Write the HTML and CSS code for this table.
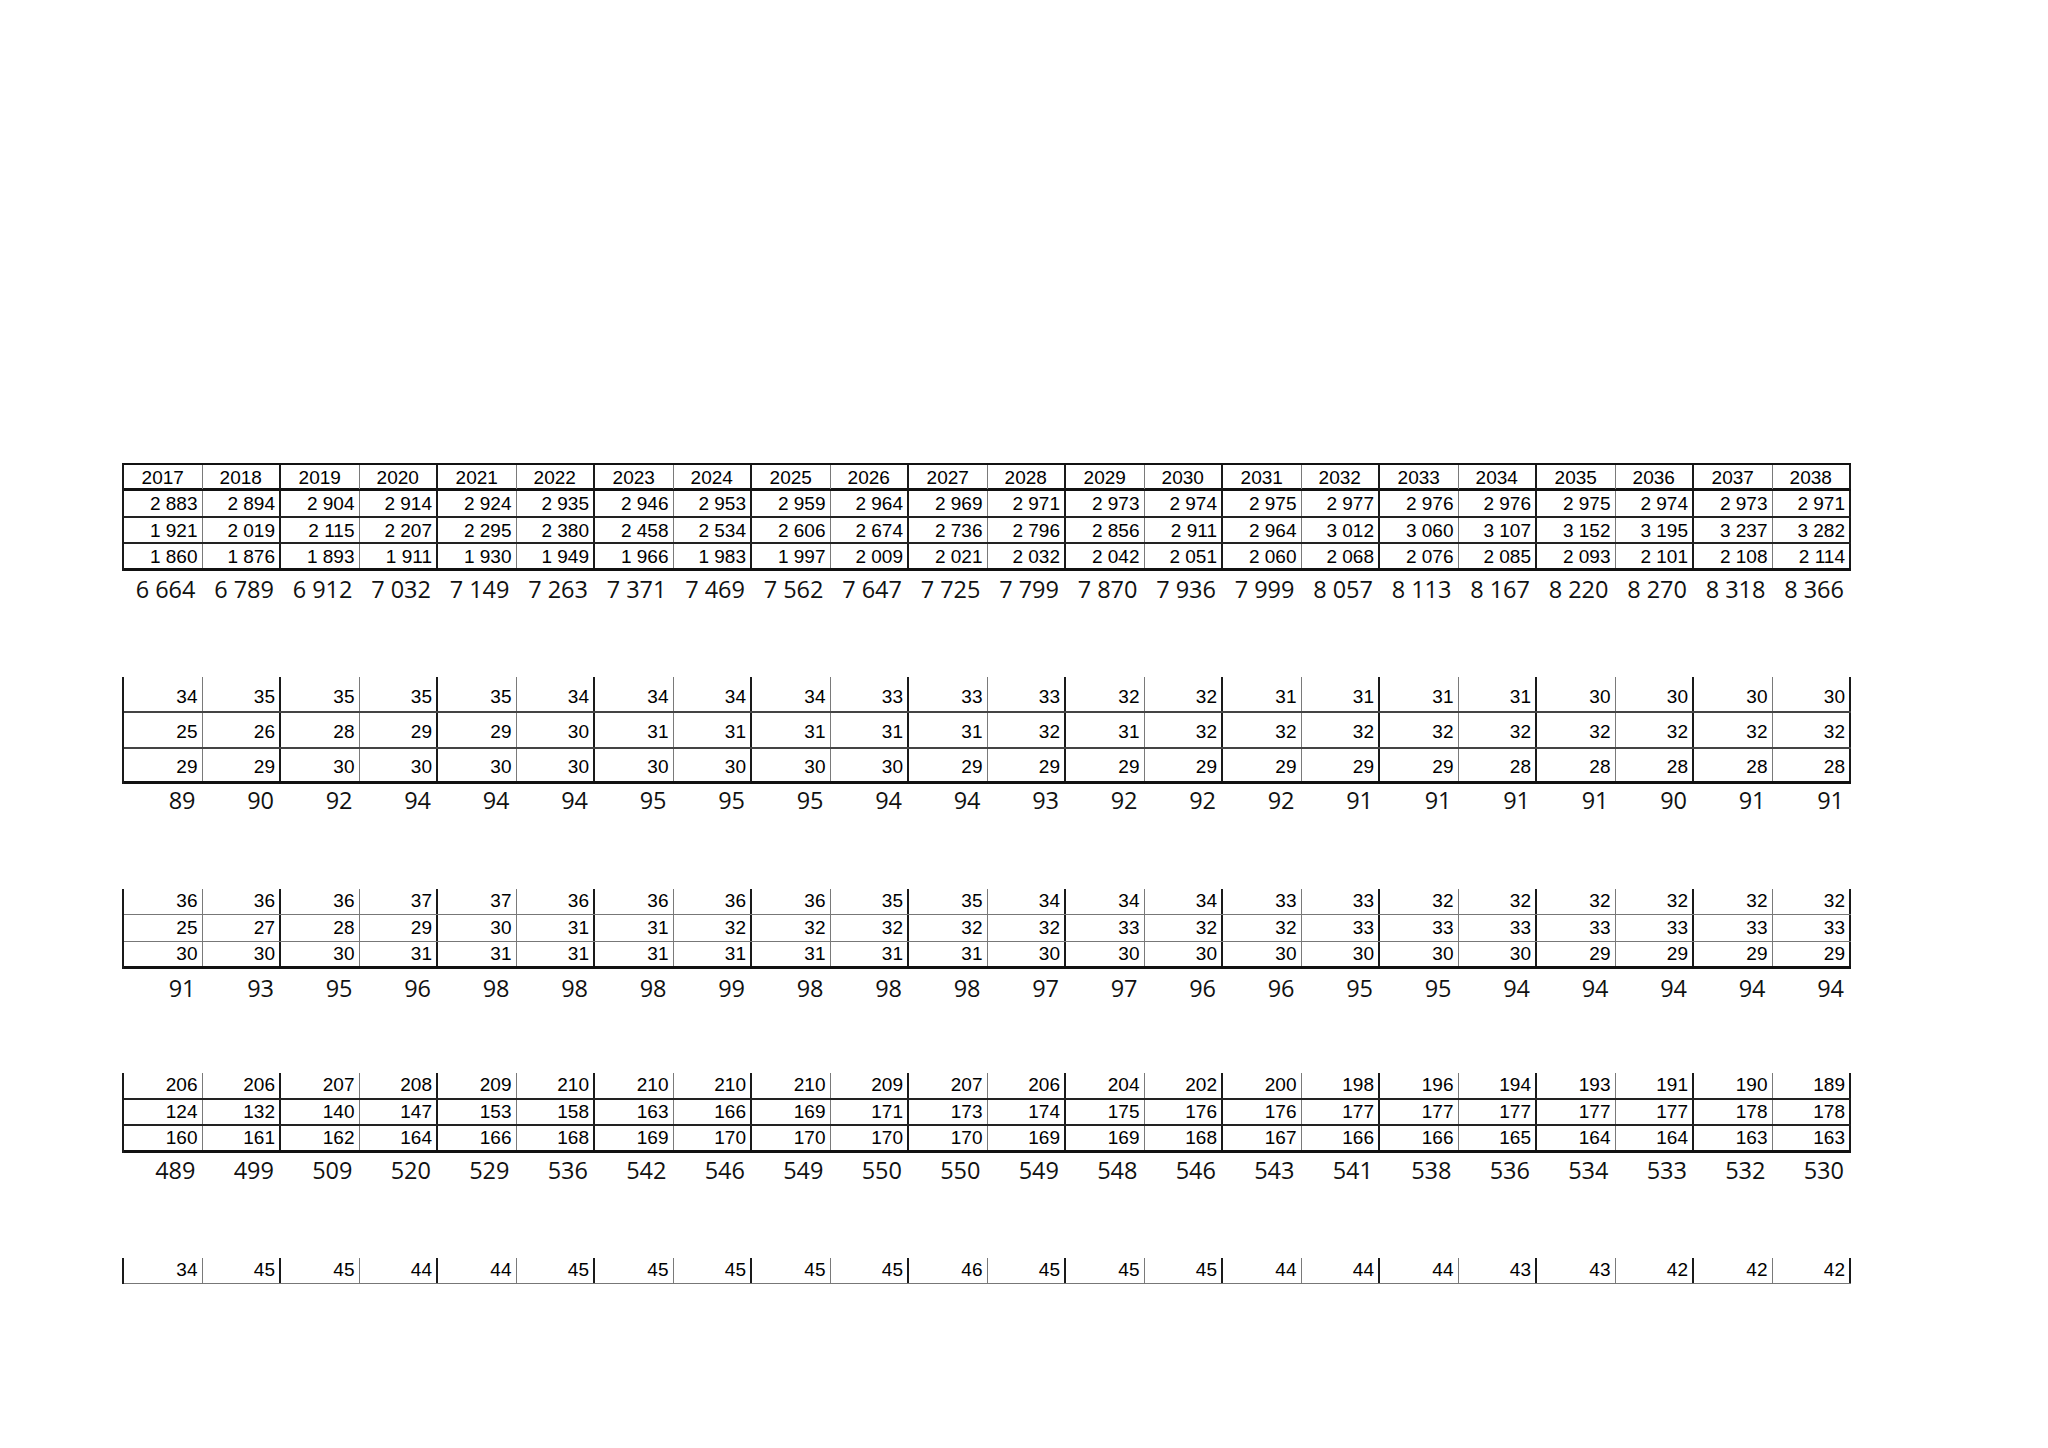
FILE: index.html
```html
<!DOCTYPE html>
<html>
<head>
<meta charset="utf-8">
<link rel="stylesheet" href="styles.css">
</head>
<body>
<div class="page">

<section class="block b1">
  <div class="row head">
    <div class="c">2017</div><div class="c">2018</div><div class="c">2019</div><div class="c">2020</div><div class="c">2021</div><div class="c">2022</div><div class="c">2023</div><div class="c">2024</div><div class="c">2025</div><div class="c">2026</div><div class="c">2027</div><div class="c">2028</div><div class="c">2029</div><div class="c">2030</div><div class="c">2031</div><div class="c">2032</div><div class="c">2033</div><div class="c">2034</div><div class="c">2035</div><div class="c">2036</div><div class="c">2037</div><div class="c">2038</div>
  </div>
  <div class="row r1">
    <div class="c">2 883</div><div class="c">2 894</div><div class="c">2 904</div><div class="c">2 914</div><div class="c">2 924</div><div class="c">2 935</div><div class="c">2 946</div><div class="c">2 953</div><div class="c">2 959</div><div class="c">2 964</div><div class="c">2 969</div><div class="c">2 971</div><div class="c">2 973</div><div class="c">2 974</div><div class="c">2 975</div><div class="c">2 977</div><div class="c">2 976</div><div class="c">2 976</div><div class="c">2 975</div><div class="c">2 974</div><div class="c">2 973</div><div class="c">2 971</div>
  </div>
  <div class="row r2">
    <div class="c">1 921</div><div class="c">2 019</div><div class="c">2 115</div><div class="c">2 207</div><div class="c">2 295</div><div class="c">2 380</div><div class="c">2 458</div><div class="c">2 534</div><div class="c">2 606</div><div class="c">2 674</div><div class="c">2 736</div><div class="c">2 796</div><div class="c">2 856</div><div class="c">2 911</div><div class="c">2 964</div><div class="c">3 012</div><div class="c">3 060</div><div class="c">3 107</div><div class="c">3 152</div><div class="c">3 195</div><div class="c">3 237</div><div class="c">3 282</div>
  </div>
  <div class="row r3">
    <div class="c">1 860</div><div class="c">1 876</div><div class="c">1 893</div><div class="c">1 911</div><div class="c">1 930</div><div class="c">1 949</div><div class="c">1 966</div><div class="c">1 983</div><div class="c">1 997</div><div class="c">2 009</div><div class="c">2 021</div><div class="c">2 032</div><div class="c">2 042</div><div class="c">2 051</div><div class="c">2 060</div><div class="c">2 068</div><div class="c">2 076</div><div class="c">2 085</div><div class="c">2 093</div><div class="c">2 101</div><div class="c">2 108</div><div class="c">2 114</div>
  </div>
</section>
<div class="sum s1">
  <div>6 664</div><div>6 789</div><div>6 912</div><div>7 032</div><div>7 149</div><div>7 263</div><div>7 371</div><div>7 469</div><div>7 562</div><div>7 647</div><div>7 725</div><div>7 799</div><div>7 870</div><div>7 936</div><div>7 999</div><div>8 057</div><div>8 113</div><div>8 167</div><div>8 220</div><div>8 270</div><div>8 318</div><div>8 366</div>
</div>

<section class="block b2">
  <div class="row r1">
    <div class="c">34</div><div class="c">35</div><div class="c">35</div><div class="c">35</div><div class="c">35</div><div class="c">34</div><div class="c">34</div><div class="c">34</div><div class="c">34</div><div class="c">33</div><div class="c">33</div><div class="c">33</div><div class="c">32</div><div class="c">32</div><div class="c">31</div><div class="c">31</div><div class="c">31</div><div class="c">31</div><div class="c">30</div><div class="c">30</div><div class="c">30</div><div class="c">30</div>
  </div>
  <div class="row r2">
    <div class="c">25</div><div class="c">26</div><div class="c">28</div><div class="c">29</div><div class="c">29</div><div class="c">30</div><div class="c">31</div><div class="c">31</div><div class="c">31</div><div class="c">31</div><div class="c">31</div><div class="c">32</div><div class="c">31</div><div class="c">32</div><div class="c">32</div><div class="c">32</div><div class="c">32</div><div class="c">32</div><div class="c">32</div><div class="c">32</div><div class="c">32</div><div class="c">32</div>
  </div>
  <div class="row r3">
    <div class="c">29</div><div class="c">29</div><div class="c">30</div><div class="c">30</div><div class="c">30</div><div class="c">30</div><div class="c">30</div><div class="c">30</div><div class="c">30</div><div class="c">30</div><div class="c">29</div><div class="c">29</div><div class="c">29</div><div class="c">29</div><div class="c">29</div><div class="c">29</div><div class="c">29</div><div class="c">28</div><div class="c">28</div><div class="c">28</div><div class="c">28</div><div class="c">28</div>
  </div>
</section>
<div class="sum s2">
  <div>89</div><div>90</div><div>92</div><div>94</div><div>94</div><div>94</div><div>95</div><div>95</div><div>95</div><div>94</div><div>94</div><div>93</div><div>92</div><div>92</div><div>92</div><div>91</div><div>91</div><div>91</div><div>91</div><div>90</div><div>91</div><div>91</div>
</div>

<section class="block b3">
  <div class="row r1">
    <div class="c">36</div><div class="c">36</div><div class="c">36</div><div class="c">37</div><div class="c">37</div><div class="c">36</div><div class="c">36</div><div class="c">36</div><div class="c">36</div><div class="c">35</div><div class="c">35</div><div class="c">34</div><div class="c">34</div><div class="c">34</div><div class="c">33</div><div class="c">33</div><div class="c">32</div><div class="c">32</div><div class="c">32</div><div class="c">32</div><div class="c">32</div><div class="c">32</div>
  </div>
  <div class="row r2">
    <div class="c">25</div><div class="c">27</div><div class="c">28</div><div class="c">29</div><div class="c">30</div><div class="c">31</div><div class="c">31</div><div class="c">32</div><div class="c">32</div><div class="c">32</div><div class="c">32</div><div class="c">32</div><div class="c">33</div><div class="c">32</div><div class="c">32</div><div class="c">33</div><div class="c">33</div><div class="c">33</div><div class="c">33</div><div class="c">33</div><div class="c">33</div><div class="c">33</div>
  </div>
  <div class="row r3">
    <div class="c">30</div><div class="c">30</div><div class="c">30</div><div class="c">31</div><div class="c">31</div><div class="c">31</div><div class="c">31</div><div class="c">31</div><div class="c">31</div><div class="c">31</div><div class="c">31</div><div class="c">30</div><div class="c">30</div><div class="c">30</div><div class="c">30</div><div class="c">30</div><div class="c">30</div><div class="c">30</div><div class="c">29</div><div class="c">29</div><div class="c">29</div><div class="c">29</div>
  </div>
</section>
<div class="sum s3">
  <div>91</div><div>93</div><div>95</div><div>96</div><div>98</div><div>98</div><div>98</div><div>99</div><div>98</div><div>98</div><div>98</div><div>97</div><div>97</div><div>96</div><div>96</div><div>95</div><div>95</div><div>94</div><div>94</div><div>94</div><div>94</div><div>94</div>
</div>

<section class="block b4">
  <div class="row r1">
    <div class="c">206</div><div class="c">206</div><div class="c">207</div><div class="c">208</div><div class="c">209</div><div class="c">210</div><div class="c">210</div><div class="c">210</div><div class="c">210</div><div class="c">209</div><div class="c">207</div><div class="c">206</div><div class="c">204</div><div class="c">202</div><div class="c">200</div><div class="c">198</div><div class="c">196</div><div class="c">194</div><div class="c">193</div><div class="c">191</div><div class="c">190</div><div class="c">189</div>
  </div>
  <div class="row r2">
    <div class="c">124</div><div class="c">132</div><div class="c">140</div><div class="c">147</div><div class="c">153</div><div class="c">158</div><div class="c">163</div><div class="c">166</div><div class="c">169</div><div class="c">171</div><div class="c">173</div><div class="c">174</div><div class="c">175</div><div class="c">176</div><div class="c">176</div><div class="c">177</div><div class="c">177</div><div class="c">177</div><div class="c">177</div><div class="c">177</div><div class="c">178</div><div class="c">178</div>
  </div>
  <div class="row r3">
    <div class="c">160</div><div class="c">161</div><div class="c">162</div><div class="c">164</div><div class="c">166</div><div class="c">168</div><div class="c">169</div><div class="c">170</div><div class="c">170</div><div class="c">170</div><div class="c">170</div><div class="c">169</div><div class="c">169</div><div class="c">168</div><div class="c">167</div><div class="c">166</div><div class="c">166</div><div class="c">165</div><div class="c">164</div><div class="c">164</div><div class="c">163</div><div class="c">163</div>
  </div>
</section>
<div class="sum s4">
  <div>489</div><div>499</div><div>509</div><div>520</div><div>529</div><div>536</div><div>542</div><div>546</div><div>549</div><div>550</div><div>550</div><div>549</div><div>548</div><div>546</div><div>543</div><div>541</div><div>538</div><div>536</div><div>534</div><div>533</div><div>532</div><div>530</div>
</div>

<section class="block b5">
  <div class="row r1">
    <div class="c">34</div><div class="c">45</div><div class="c">45</div><div class="c">44</div><div class="c">44</div><div class="c">45</div><div class="c">45</div><div class="c">45</div><div class="c">45</div><div class="c">45</div><div class="c">46</div><div class="c">45</div><div class="c">45</div><div class="c">45</div><div class="c">44</div><div class="c">44</div><div class="c">44</div><div class="c">43</div><div class="c">43</div><div class="c">42</div><div class="c">42</div><div class="c">42</div>
  </div>
</section>

</div>
</body>
</html>
```

FILE: styles.css
```css
html, body {
  margin: 0;
  padding: 0;
  background: #ffffff;
}

.page {
  padding: 463px 0 0 122px;
  font-family: "Liberation Sans", Arial, sans-serif;
  color: #000;
}

.block {
  width: 1727px;
  border-left: 2px solid #1a1a1a;
}

.row {
  display: grid;
  grid-template-columns: repeat(22, 78.5px);
  box-sizing: border-box;
}

.c {
  box-sizing: border-box;
  display: flex;
  align-items: center;
  justify-content: flex-end;
  padding-right: 4px;
  font-size: 19px;
  line-height: 22px;
  white-space: nowrap;
}

.c:nth-child(odd) {
  border-right: 1px solid #7a7a7a;
}

.c:nth-child(even) {
  border-right: 2px solid #1a1a1a;
}

/* block 1: the year table */
.b1 {
  border-top: 2px solid #111;
}
.b1 .head {
  height: 26px;
  border-bottom: 3px solid #111;
}
.b1 .head .c {
  justify-content: center;
  padding: 2px 0 0 0;
}
.b1 .r1, .b1 .r2 {
  height: 26.5px;
  border-bottom: 2px solid #222;
}
.b1 .r3 {
  height: 27px;
  border-bottom: 3px solid #111;
}
.b1 .c {
  padding-top: 2px;
}

/* block 2 */
.b2 {
  margin-top: 73px;
}
.b2 .r1 {
  height: 36px;
  border-bottom: 2px solid #444;
}
.b2 .r2 {
  height: 35.5px;
  border-bottom: 2px solid #444;
}
.b2 .r3 {
  height: 35px;
  border-bottom: 3px solid #111;
}
.b2 .c {
  padding-top: 5px;
}

/* block 3 */
.b3 {
  margin-top: 74px;
}
.b3 .r1, .b3 .r2 {
  height: 26.5px;
  border-bottom: 1px solid #777;
}
.b3 .r3 {
  height: 27.5px;
  border-bottom: 3px solid #111;
}

/* block 4 */
.b4 {
  margin-top: 70px;
}
.b4 .r1 {
  height: 27.5px;
  border-bottom: 2px solid #222;
}
.b4 .r2 {
  height: 26px;
  border-bottom: 2px solid #222;
}
.b4 .r3 {
  height: 26.5px;
  border-bottom: 3px solid #111;
}

/* block 5 */
.b5 {
  margin-top: 73px;
}
.b5 .r1 {
  height: 26.5px;
  border-bottom: 1px solid #777;
}

/* sum rows */
.sum {
  display: grid;
  grid-template-columns: repeat(22, 78.5px);
  padding-left: 2px;
  font-family: "Open Sans", "Noto Sans", sans-serif;
  font-size: 23.5px;
  line-height: 30px;
  color: #111;
}
.sum > div {
  text-align: right;
  padding-right: 7px;
  white-space: nowrap;
}
.s1 { padding-top: 3px; }
.s2 { padding-top: 1px; }
.s3 { padding-top: 3.5px; }
.s4 { padding-top: 2px; }
```
